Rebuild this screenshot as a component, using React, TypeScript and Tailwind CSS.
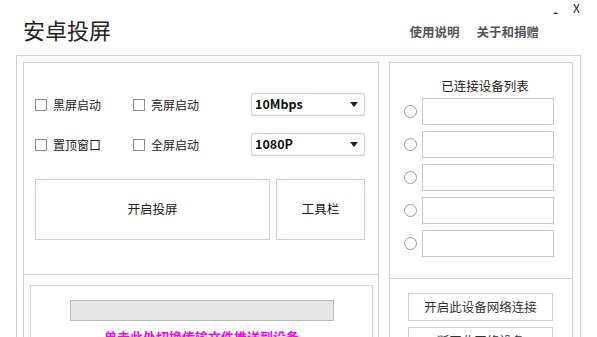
import React from "react";

const font = { fontFamily: '"Microsoft YaHei", "Noto Sans CJK SC", "Noto Sans", sans-serif' };

function Check({ label }: { label: string }) {
  return (
    <div className="flex items-center gap-[6px] w-[98px]">
      <div className="w-[12px] h-[12px] border border-[#8f8f8f] bg-white" />
      <span className="text-[12px] text-[#222] leading-none">{label}</span>
    </div>
  );
}

function Select({ value }: { value: string }) {
  return (
    <div className="w-[114px] h-[23px] border border-[#d9d9d9] bg-white flex items-center justify-between pl-[3px] pr-[6px] shadow-[inset_0_0_0_1px_#f2f2f2]">
      <span className="text-[12.5px] font-semibold text-[#111] leading-none">{value}</span>
      <svg width="8" height="5" viewBox="0 0 8 5"><path d="M0 0 L8 0 L4 5 Z" fill="#222" /></svg>
    </div>
  );
}

function DeviceRow() {
  return (
    <div className="flex items-center h-[27px]">
      <div className="w-[13px] h-[13px] rounded-full border border-[#9a9a9a] bg-white ml-[14px]" />
      <div className="ml-[5px] w-[132px] h-[27px] border border-[#c9c6e3] bg-white" />
    </div>
  );
}

export default function App() {
  return (
    <div className="w-[597px] h-[337px] bg-white overflow-hidden relative" style={font}>
      <div className="flex h-[55px]">
        <div className="pl-[23px] pt-[14px] text-[22px] text-[#222] leading-[30px]">安卓投屏</div>
        <div className="flex-1" />
        <div className="flex flex-col items-end">
          <div className="flex items-start h-[22px] pr-[17px] gap-[15px]">
            <span className="text-[13px] text-[#222] font-bold leading-none mt-[5px]">-</span>
            <span className="text-[12px] text-[#222] leading-none mt-[2px]">X</span>
          </div>
          <div className="flex gap-[17px] pr-[58px] text-[12.5px] text-[#555] font-semibold leading-none mt-[4px]">
            <span>使用说明</span>
            <span>关于和捐赠</span>
          </div>
        </div>
      </div>
      <div className="ml-[16px] w-[565px] h-[300px] border border-[#cfcde3] border-b-0 pt-[6px] pl-[6px] flex gap-[10px]">
        <div className="w-[356px] h-[300px] shrink-0 border border-[#cfcde3] border-b-0 flex flex-col">
          <div className="h-[212px] shrink-0 border-b border-[#cfcde3] pl-[11px] pt-[30px]">
            <div className="flex items-center h-[23px]">
              <Check label="黑屏启动" />
              <Check label="亮屏启动" />
              <div className="ml-[20px]"><Select value="10Mbps" /></div>
            </div>
            <div className="flex items-center h-[23px] mt-[17px]">
              <Check label="置顶窗口" />
              <Check label="全屏启动" />
              <div className="ml-[20px]"><Select value="1080P" /></div>
            </div>
            <div className="flex gap-[6px] mt-[23px]">
              <div className="w-[235px] h-[61px] border border-[#cfcde3] flex items-center justify-center text-[12.5px] text-[#222]">开启投屏</div>
              <div className="w-[89px] h-[61px] border border-[#cfcde3] flex items-center justify-center text-[12.5px] text-[#222]">工具栏</div>
            </div>
          </div>
          <div className="pl-[6px] pt-[10px] shrink-0">
            <div className="w-[343px] h-[100px] border border-[#cfcde3] flex flex-col items-center pt-[14px]">
              <div className="w-[264px] h-[21px] bg-[#e6e6e6] border border-[#bcbcbc]" />
              <div className="mt-[9px] text-[13px] text-[#ff00ff] font-semibold leading-none">单击此处切换传输文件推送到设备</div>
            </div>
          </div>
        </div>
        <div className="w-[184px] h-[300px] shrink-0 border border-[#cfcde3] border-b-0 flex flex-col">
          <div className="h-[216px] shrink-0 border-b border-[#cfcde3] pt-[17px]">
            <div className="text-[12.5px] text-[#222] text-center pl-[8px] leading-none">已连接设备列表</div>
            <div className="flex flex-col gap-[6px] mt-[5px]">
              <DeviceRow />
              <DeviceRow />
              <DeviceRow />
              <DeviceRow />
              <DeviceRow />
            </div>
          </div>
          <div className="pl-[18px] pt-[14px] flex flex-col gap-[6px] shrink-0">
            <div className="w-[145px] h-[28px] border border-[#cfcde3] flex items-center justify-center text-[12.5px] text-[#333]">开启此设备网络连接</div>
            <div className="w-[145px] h-[28px] border border-[#cfcde3] flex items-center justify-center text-[12.5px] text-[#333]">断开此网络设备</div>
          </div>
        </div>
      </div>
    </div>
  );
}
